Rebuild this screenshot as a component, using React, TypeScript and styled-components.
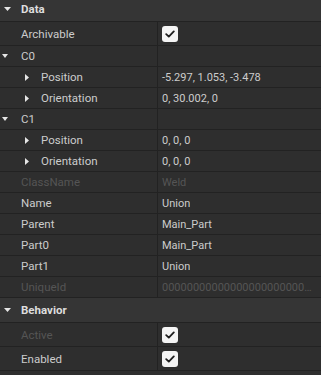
import React from "react";
import styled, { createGlobalStyle } from "styled-components";

const GlobalStyle = createGlobalStyle`
  html, body { margin: 0; padding: 0; background: #2e2e2e; }
  * { box-sizing: border-box; }
`;

const Panel = styled.div`
  width: 321px;
  height: 375px;
  overflow: hidden;
  background: #2e2e2e;
  font-family: Roboto, "Liberation Sans", sans-serif;
  font-size: 11.5px;
  color: #cccccc;
`;

const Scroller = styled.div`
  margin-top: -3px;
  display: flex;
  flex-direction: column;
`;

const SectionHeader = styled.div`
  height: 25px;
  background: #353535;
  border-bottom: 1px solid #222222;
  display: flex;
  align-items: center;
  font-weight: 700;
  color: #dddddd;
`;

const Row = styled.div<{ $tall?: boolean }>`
  height: ${(p) => (p.$tall ? 24 : 21)}px;
  display: grid;
  grid-template-columns: 158px 1fr;
  border-bottom: 1px solid #222222;
`;

const NameCell = styled.div<{ $indent: number; $disabled?: boolean }>`
  border-right: 1px solid #222222;
  display: flex;
  align-items: center;
  padding-left: ${(p) => p.$indent}px;
  color: ${(p) => (p.$disabled ? "#555555" : "#cccccc")};
  white-space: nowrap;
  overflow: hidden;
`;

const ValueCell = styled.div<{ $disabled?: boolean }>`
  display: flex;
  align-items: center;
  padding-left: 4px;
  padding-right: 8px;
  font-size: 11px;
  color: ${(p) => (p.$disabled ? "#555555" : "#cccccc")};
  white-space: nowrap;
  overflow: hidden;
  min-width: 0;
`;

const Ellipsis = styled.span`
  overflow: hidden;
  text-overflow: ellipsis;
  white-space: nowrap;
  min-width: 0;
`;

const Arrow = styled.svg<{ $w: number; $gap: number }>`
  width: ${(p) => p.$w}px;
  flex: none;
  margin-right: ${(p) => p.$gap}px;
`;

const Check = styled.div`
  width: 16px;
  height: 16px;
  border-radius: 3px;
  background: #f4f4f4;
  display: flex;
  align-items: center;
  justify-content: center;
`;

const DownBig = () => (
  <Arrow $w={7} $gap={10} viewBox="0 0 7 4" height={4} style={{ marginLeft: 4 }}>
    <path d="M0 0H7L3.5 4Z" fill="#e6e6e6" />
  </Arrow>
);

const DownSmall = () => (
  <Arrow $w={6} $gap={13} viewBox="0 0 6 4" height={4} style={{ marginLeft: 2 }}>
    <path d="M0 0H6L3 4Z" fill="#e6e6e6" />
  </Arrow>
);

const RightArrow = () => (
  <Arrow $w={4} $gap={12} viewBox="0 0 4 7" height={7} style={{ marginLeft: 25 }}>
    <path d="M0 0V7L4 3.5Z" fill="#e6e6e6" />
  </Arrow>
);

const CheckBox = () => (
  <Check>
    <svg width="10" height="8" viewBox="0 0 10 8">
      <path d="M1.2 4.2L3.8 6.6L8.8 1.4" fill="none" stroke="#1e1e1e" strokeWidth="1.8" strokeLinecap="round" strokeLinejoin="round" />
    </svg>
  </Check>
);

const Prop = ({ name, value, disabled, check, tall }: { name: string; value?: React.ReactNode; disabled?: boolean; check?: boolean; tall?: boolean }) => (
  <Row $tall={tall || check}>
    <NameCell $indent={21} $disabled={disabled}>{name}</NameCell>
    <ValueCell $disabled={disabled}>{check ? <CheckBox /> : <Ellipsis>{value}</Ellipsis>}</ValueCell>
  </Row>
);

const Group = ({ name }: { name: string }) => (
  <Row>
    <NameCell $indent={0}>
      <DownSmall />
      {name}
    </NameCell>
    <ValueCell />
  </Row>
);

const Sub = ({ name, value }: { name: string; value: string }) => (
  <Row>
    <NameCell $indent={0}>
      <RightArrow />
      {name}
    </NameCell>
    <ValueCell>{value}</ValueCell>
  </Row>
);

const Section = ({ title }: { title: string }) => (
  <SectionHeader>
    <DownBig />
    {title}
  </SectionHeader>
);

export default function App() {
  return (
    <>
      <GlobalStyle />
      <Panel>
        <Scroller>
          <Section title="Data" />
          <Prop name="Archivable" check />
          <Group name="C0" />
          <Sub name="Position" value="-5.297, 1.053, -3.478" />
          <Sub name="Orientation" value="0, 30.002, 0" />
          <Group name="C1" />
          <Sub name="Position" value="0, 0, 0" />
          <Sub name="Orientation" value="0, 0, 0" />
          <Prop name="ClassName" value="Weld" disabled />
          <Prop name="Name" value="Union" />
          <Prop name="Parent" value="Main_Part" />
          <Prop name="Part0" value="Main_Part" />
          <Prop name="Part1" value="Union" />
          <Prop name="UniqueId" value="0000000000000000000000000000000000" disabled />
          <Section title="Behavior" />
          <Prop name="Active" check disabled />
          <Prop name="Enabled" check />
        </Scroller>
      </Panel>
    </>
  );
}
